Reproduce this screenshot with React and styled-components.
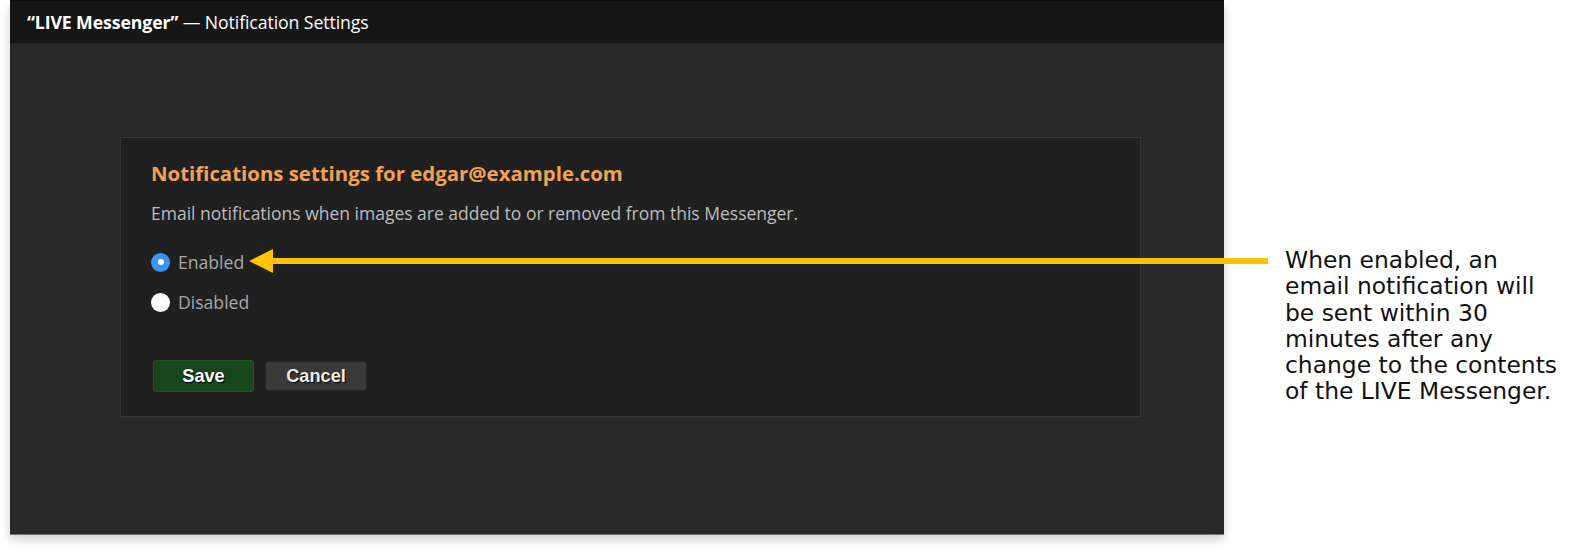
import React from "react";
import styled, { createGlobalStyle } from "styled-components";

const Global = createGlobalStyle`
  html, body { margin: 0; padding: 0; background: #ffffff; }
  body { font-family: "Open Sans", "Noto Sans", sans-serif; }
`;

const Page = styled.div`
  position: relative;
  display: flex;
  align-items: flex-start;
  width: 1580px;
  height: 552px;
  background: #ffffff;
  overflow: hidden;
`;

const Window = styled.div`
  margin-left: 10px;
  width: 1214px;
  height: 534px;
  display: flex;
  flex-direction: column;
  background: #292929;
  box-shadow: 0 1px 0 #6f6f6f, 0 6px 10px rgba(0, 0, 0, 0.18);
`;

const TitleBar = styled.div`
  height: 43px;
  flex: none;
  display: flex;
  align-items: center;
  padding-left: 17px;
  background: #161616;
  border-top: 1px solid #0e0e0e;
  box-sizing: border-box;
  color: #ffffff;
  font-size: 17.7px;
  letter-spacing: -0.1px;
`;

const Strong = styled.span`
  font-weight: 700;
`;

const Body = styled.div`
  flex: 1;
  padding: 94px 0 0 110px;
`;

const Panel = styled.div`
  box-sizing: border-box;
  width: 1021px;
  height: 280px;
  background: #202020;
  border: 1px solid #353535;
  padding: 21px 0 0 30px;
`;

const Heading = styled.h2`
  margin: 0;
  font-size: 20.4px;
  line-height: 28px;
  font-weight: 700;
  color: #f2a255;
`;

const Desc = styled.p`
  margin: 14px 0 0;
  font-size: 17.5px;
  line-height: 24px;
  color: #bdbdbd;
`;

const Options = styled.div`
  margin-top: 25px;
  display: flex;
  flex-direction: column;
  gap: 16px;
`;

const Option = styled.label`
  display: flex;
  align-items: center;
  gap: 8px;
  height: 24px;
  font-size: 17.6px;
  color: #a8a8a8;
`;

const Radio = styled.span`
  box-sizing: border-box;
  width: 19px;
  height: 19px;
  border-radius: 50%;
  background: ${(p) => (p.$checked ? "#3a95f2" : "#ffffff")};
  display: flex;
  align-items: center;
  justify-content: center;
  &::after {
    content: "";
    width: 6px;
    height: 6px;
    border-radius: 50%;
    background: #ffffff;
    display: ${(p) => (p.$checked ? "block" : "none")};
  }
`;

const Buttons = styled.div`
  margin-top: 46px;
  margin-left: 2px;
  display: flex;
  align-items: center;
  gap: 11px;
`;

const Button = styled.button`
  box-sizing: border-box;
  width: ${(p) => (p.$primary ? "101px" : "102px")};
  height: ${(p) => (p.$primary ? "32px" : "30px")};
  border-radius: 3px;
  border: 1px solid ${(p) => (p.$primary ? "#24531f" : "#262626")};
  background: ${(p) => (p.$primary ? "#17461a" : "#3a3a3a")};
  color: ${(p) => (p.$primary ? "#ffffff" : "#ececec")};
  font-family: "Liberation Sans", Arial, sans-serif;
  font-weight: 700;
  font-size: 18.2px;
  text-shadow: 1px 1px 1px #000000;
  padding: 0;
  cursor: pointer;
`;

const Note = styled.div`
  margin-left: 61px;
  padding-top: 247px;
  width: 280px;
  font-family: "DejaVu Sans", Verdana, sans-serif;
  font-size: 23.4px;
  line-height: 26.3px;
  color: #111111;
`;

const Arrow = styled.svg`
  position: absolute;
  left: 249px;
  top: 248px;
`;

export default function App() {
  return (
    <>
      <Global />
      <Page>
        <Window>
          <TitleBar>
            <Strong>“LIVE Messenger”</Strong>&nbsp;— Notification Settings
          </TitleBar>
          <Body>
            <Panel>
              <Heading>Notifications settings for edgar@example.com</Heading>
              <Desc>
                Email notifications when images are added to or removed from
                this Messenger.
              </Desc>
              <Options>
                <Option>
                  <Radio $checked />
                  Enabled
                </Option>
                <Option>
                  <Radio />
                  Disabled
                </Option>
              </Options>
              <Buttons>
                <Button $primary>Save</Button>
                <Button>Cancel</Button>
              </Buttons>
            </Panel>
          </Body>
        </Window>
        <Note>
          When enabled, an email notification will be sent within 30 minutes
          after any change to the contents of the LIVE Messenger.
        </Note>
        <Arrow width="1020" height="26" viewBox="0 0 1020 26">
          <polygon points="0,13 24,1 24,25" fill="#ffc200" />
          <rect x="22" y="10" width="997" height="6" fill="#ffc200" />
        </Arrow>
      </Page>
    </>
  );
}
